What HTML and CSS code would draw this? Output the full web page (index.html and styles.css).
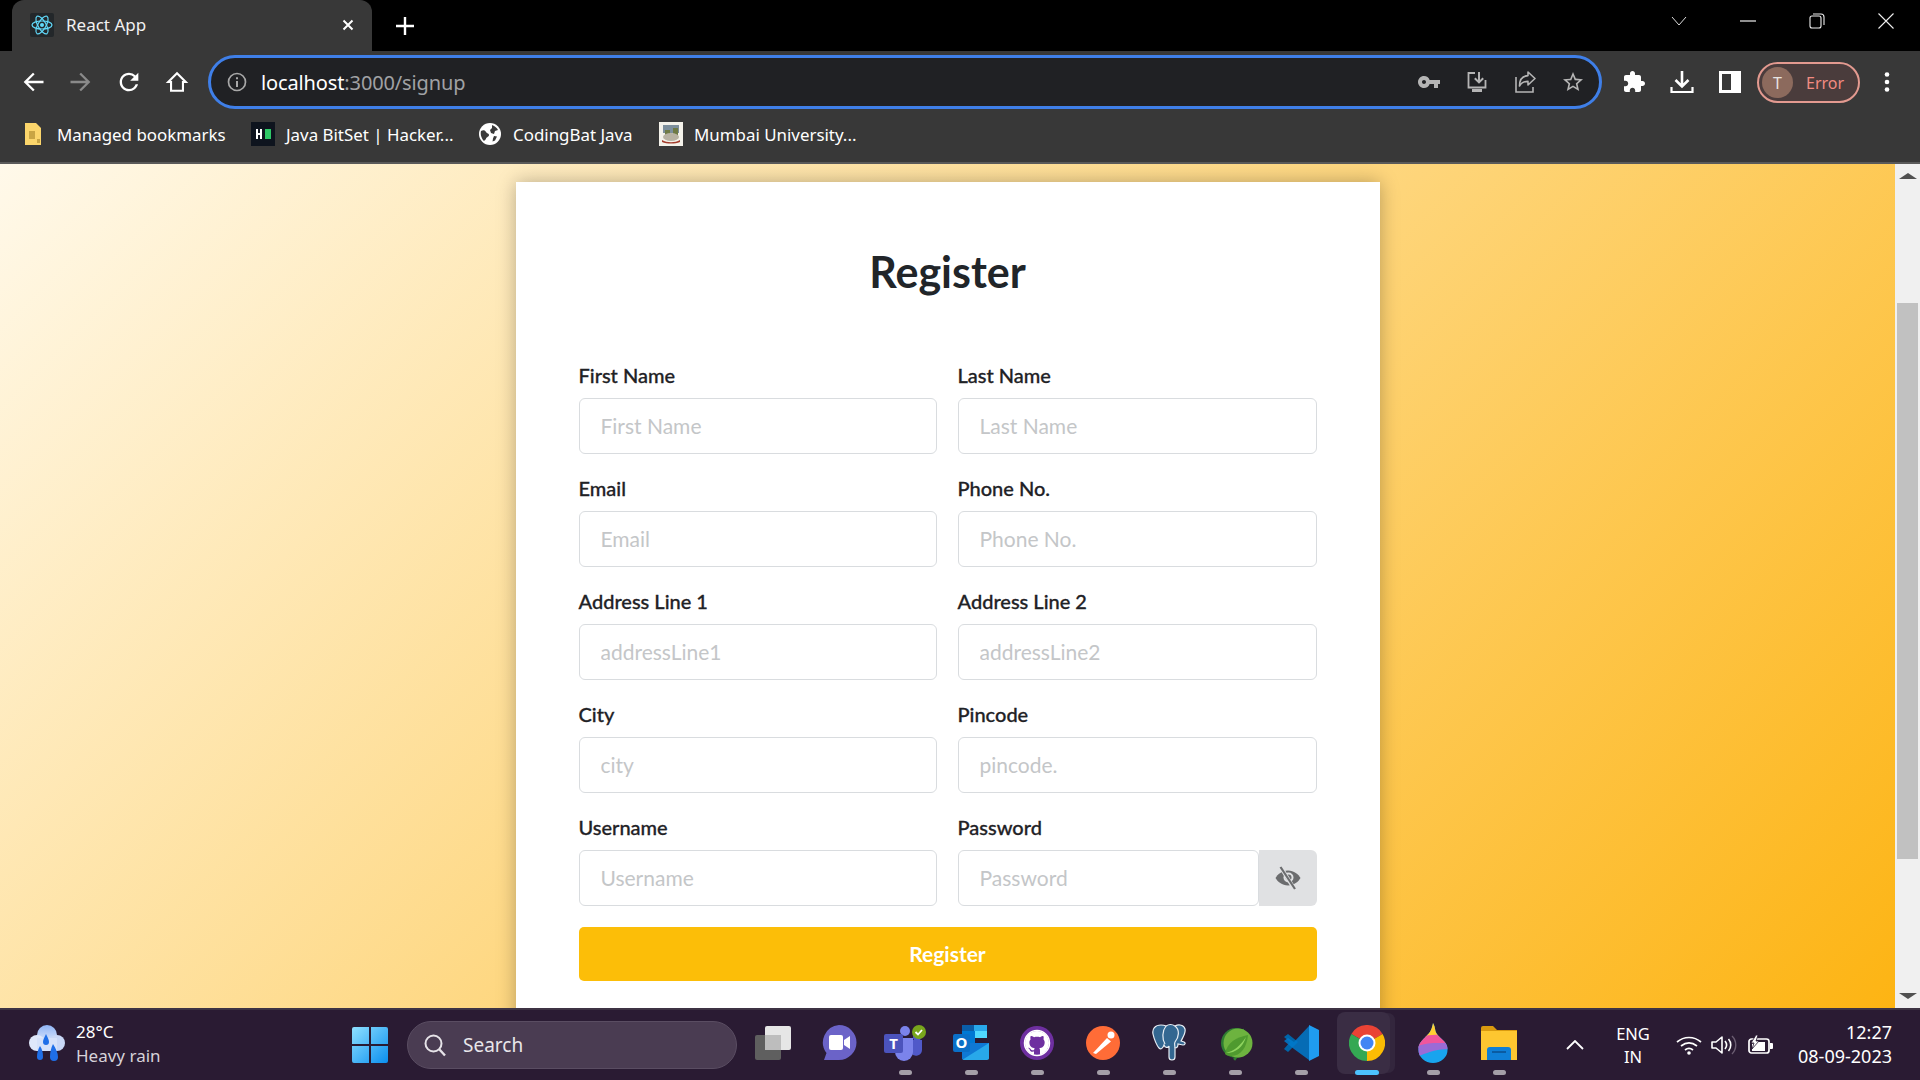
FILE: index.html
```html
<!DOCTYPE html>
<html lang="en">
<head>
<meta charset="utf-8">
<title>React App</title>
<link rel="stylesheet" href="styles.css">
</head>
<body>
<header class="chrome">
  <div class="tabstrip">
    <div class="tab">
      <svg class="favicon" viewBox="0 0 24 24"><rect width="24" height="24" rx="2" fill="#23272a"/><g fill="none" stroke="#61dafb" stroke-width="1.2"><ellipse cx="12" cy="12" rx="10" ry="4"/><ellipse cx="12" cy="12" rx="10" ry="4" transform="rotate(60 12 12)"/><ellipse cx="12" cy="12" rx="10" ry="4" transform="rotate(120 12 12)"/></g><circle cx="12" cy="12" r="2" fill="#61dafb"/></svg>
      <span class="tab-title">React App</span>
      <svg class="tab-close" viewBox="0 0 12 12"><path d="M1.500 1.500l9 9M10.500 1.500l-9 9" stroke="#fff" stroke-width="2"/></svg>
    </div>
    <svg class="new-tab" viewBox="0 0 18 18"><path d="M9 0v18M0 9h18" stroke="#fff" stroke-width="2.400"/></svg>
    <div class="winctl">
      <span class="winbtn"><svg viewBox="0 0 16 10" width="16" height="10"><path d="M1 1l7 8 7-8" fill="none" stroke="#ddd" stroke-width="1"/></svg></span>
      <span class="winbtn"><svg viewBox="0 0 16 2" width="16" height="2"><path d="M0 1h16" stroke="#eee" stroke-width="1.200"/></svg></span>
      <span class="winbtn"><svg viewBox="0 0 16 16" width="16" height="16"><rect x="1" y="3" width="11" height="12" rx="2" fill="none" stroke="#eee" stroke-width="1.100"/><path d="M4 1h8a3 3 0 0 1 3 3v8" fill="none" stroke="#eee" stroke-width="1.100"/></svg></span>
      <span class="winbtn"><svg viewBox="0 0 16 16" width="16" height="16"><path d="M.5.5l15 15M15.500.5l-15 15" stroke="#eee" stroke-width="1.100"/></svg></span>
    </div>
  </div>
  <div class="toolbar">
    <span class="tb-btn tb-nav"><svg viewBox="0 0 24 24"><path fill="#fff" d="M21 11H7.800l5.600-5.600L12 4l-8 8 8 8 1.400-1.400L7.800 13H21z"/></svg></span>
    <span class="tb-btn tb-nav"><svg viewBox="0 0 24 24"><path fill="#8a8a8a" d="M3 11h13.200l-5.600-5.600L12 4l8 8-8 8-1.400-1.400 5.600-5.600H3z"/></svg></span>
    <span class="tb-btn tb-nav"><svg viewBox="0 0 24 24"><path fill="#fff" d="M17.650 6.350A7.958 7.958 0 0 0 12 4c-4.420 0-7.990 3.580-7.990 8s3.570 8 7.990 8c3.730 0 6.840-2.550 7.730-6h-2.080A5.990 5.990 0 0 1 12 18c-3.310 0-6-2.690-6-6s2.690-6 6-6c1.660 0 3.140.69 4.220 1.780L13 11h7V4l-2.350 2.350z"/></svg></span>
    <span class="tb-btn tb-nav"><svg viewBox="0 0 24 24"><path fill="none" stroke="#fff" stroke-width="1.800" d="M12 4.500L4.500 12h2.400v7.500h10.200V12h2.400z"/></svg></span>
    <div class="omnibox">
      <svg class="info" viewBox="0 0 20 20"><circle cx="10" cy="10" r="8.500" fill="none" stroke="#a8a8a8" stroke-width="1.700"/><path d="M10 9v6M10 5.200v2" stroke="#a8a8a8" stroke-width="2"/></svg>
      <span class="url"><span class="url-host">localhost</span><span class="url-rest">:3000/signup</span></span>
      <span class="omni-icons">
        <span class="tb-btn"><svg viewBox="0 0 24 24"><path fill="#b5b5b5" d="M12.650 10A5.990 5.990 0 0 0 7 6c-3.310 0-6 2.690-6 6s2.690 6 6 6a5.990 5.990 0 0 0 5.650-4H17v4h4v-4h2v-4H12.650zM7 14c-1.100 0-2-.9-2-2s.9-2 2-2 2 .9 2 2-.9 2-2 2z"/></svg></span>
        <span class="tb-btn"><svg viewBox="0 0 24 24"><path fill="none" stroke="#b5b5b5" stroke-width="1.800" d="M10 3H3.500v14.500h17V10"/><path fill="none" stroke="#b5b5b5" stroke-width="2" d="M14 2v10M9.800 8.200L14 12.400l4.200-4.200"/><path fill="#b5b5b5" d="M7 19h10v3H7z"/></svg></span>
        <span class="tb-btn"><svg viewBox="0 0 24 24"><path fill="none" stroke="#b5b5b5" stroke-width="1.600" d="M3 7v15h17v-5"/><path fill="none" stroke="#b5b5b5" stroke-width="1.600" stroke-linejoin="round" d="M15 2l7 6.500-7 6.500v-3.600c-4 0-6.500 1-8.500 4.600 0-6 3-10 8.500-10.400z"/></svg></span>
        <span class="tb-btn"><svg viewBox="0 0 24 24"><path fill="#b5b5b5" d="M22 9.240l-7.190-.62L12 2 9.190 8.630 2 9.240l5.460 4.730L5.820 21 12 17.270 18.180 21l-1.630-7.030L22 9.240zM12 15.400l-3.760 2.270 1-4.280-3.320-2.880 4.380-.38L12 6.100l1.710 4.040 4.380.38-3.320 2.880 1 4.280L12 15.400z"/></svg></span>
      </span>
    </div>
    <span class="tb-btn tb-first"><svg viewBox="0 0 24 24"><path fill="#fff" d="M20.500 11H19V7c0-1.100-.9-2-2-2h-4V3.500C13 2.120 11.880 1 10.500 1S8 2.120 8 3.500V5H4c-1.100 0-1.990.9-1.990 2v3.800H3.500c1.490 0 2.700 1.210 2.700 2.700s-1.210 2.700-2.700 2.700H2V20c0 1.100.9 2 2 2h3.800v-1.500c0-1.490 1.210-2.700 2.700-2.700 1.490 0 2.700 1.210 2.700 2.700V22H17c1.100 0 2-.9 2-2v-4h1.500c1.380 0 2.500-1.120 2.500-2.500S21.880 11 20.500 11z"/></svg></span>
    <span class="tb-btn"><svg viewBox="0 0 24 24"><path fill="none" stroke="#fff" stroke-width="2.600" d="M12 1v15M5.500 10l6.500 6.500 6.500-6.500"/><path fill="none" stroke="#fff" stroke-width="2.200" d="M1.500 17v5h21v-5"/></svg></span>
    <span class="tb-btn"><svg viewBox="0 0 24 24"><path fill="#fff" fill-rule="evenodd" d="M1 1h22v22H1zM4 4v16h9V4z"/></svg></span>
    <div class="profile"><span class="avatar">T</span><span class="profile-text">Error</span></div>
    <span class="tb-btn tb-menu"><svg viewBox="0 0 24 24"><circle cx="12" cy="4.500" r="2.300" fill="#fff"/><circle cx="12" cy="12" r="2.300" fill="#fff"/><circle cx="12" cy="19.500" r="2.300" fill="#fff"/></svg></span>
  </div>
  <div class="bookmarks">
    <div class="bm bm-1"><svg class="bm-icon" viewBox="0 0 18 24"><path fill="#fbd56b" d="M1 1h11l5 5v17H1z"/><path fill="#c9a544" d="M5 9h6v8H5zM13 17h3v4h-3z"/></svg><span>Managed bookmarks</span></div>
    <div class="bm bm-2"><svg class="bm-icon-sq" viewBox="0 0 24 24"><rect width="24" height="24" fill="#0e141e"/><path fill="#fff" d="M5 7h2v4h2V7h2v10H9v-4H7v4H5z"/><path fill="#2ec866" d="M14 7h6v10h-6z"/></svg><span>Java BitSet | Hacker...</span></div>
    <div class="bm bm-3"><svg class="bm-icon-sq" viewBox="0 0 24 24"><circle cx="12" cy="12" r="11" fill="#fff"/><path fill="#3a3a3a" d="M3 9c2-1 4-1 5 1s3 1 3 3-3 2-3 4l-2 2C4 17 2 13 3 9zM14 3c3 1 5 3 6 5l-3 1-1 3-3-1-1-3 2-2zM16 14l3 .5-2 4-2.500 1 .5-3z"/></svg><span>CodingBat Java</span></div>
    <div class="bm"><svg class="bm-icon-sq" viewBox="0 0 24 24"><rect width="24" height="24" fill="#f4f2ea"/><path fill="#7d8f9c" d="M4 3h16v8H4z"/><path fill="#6f7a45" d="M6 8h5v6H6zM14 6h5v8h-5z"/><ellipse cx="12" cy="15" rx="8" ry="4" fill="#b8b2a2"/><path fill="#a33c2c" d="M3 18c5 3 13 3 18 0v2c-5 2-13 2-18 0z"/></svg><span>Mumbai University...</span></div>
  </div>
</header>

<main class="viewport">
  <div class="page">
    <section class="card">
      <h1 class="card-title">Register</h1>
      <form class="form-grid">
        <div class="field"><label class="label">First Name</label><input class="input" placeholder="First Name"></div>
        <div class="field"><label class="label">Last Name</label><input class="input" placeholder="Last Name"></div>
        <div class="field"><label class="label">Email</label><input class="input" placeholder="Email"></div>
        <div class="field"><label class="label">Phone No.</label><input class="input" placeholder="Phone No."></div>
        <div class="field"><label class="label">Address Line 1</label><input class="input" placeholder="addressLine1"></div>
        <div class="field"><label class="label">Address Line 2</label><input class="input" placeholder="addressLine2"></div>
        <div class="field"><label class="label">City</label><input class="input" placeholder="city"></div>
        <div class="field"><label class="label">Pincode</label><input class="input" placeholder="pincode."></div>
        <div class="field"><label class="label">Username</label><input class="input" placeholder="Username"></div>
        <div class="field"><label class="label">Password</label>
          <div class="input-group">
            <input class="input input-joined" placeholder="Password">
            <span class="eye-btn"><svg viewBox="0 0 28 24" width="28" height="24"><path fill="#6b6c6e" d="M14 4.500C8 4.500 3.500 8.500 1.500 12c2 3.500 6.500 7.500 12.500 7.500S24.500 15.500 26.500 12c-2-3.500-6.500-7.500-12.500-7.500z"/><circle cx="14.500" cy="11.500" r="5" fill="#e0e1e3"/><circle cx="14.500" cy="11.500" r="3" fill="#6b6c6e"/><path d="M6 0l15 24" stroke="#e0e1e3" stroke-width="4"/><path d="M6.500 1l14.500 22" stroke="#6b6c6e" stroke-width="2.200"/></svg></span>
          </div>
        </div>
        <button type="button" class="submit">Register</button>
      </form>
    </section>
  </div>
  <aside class="scrollbar">
    <span class="arrow arrow-up"></span>
    <span class="thumb"></span>
    <span class="arrow arrow-down"></span>
  </aside>
</main>

<footer class="taskbar">
  <div class="weather">
    <svg class="weather-icon" viewBox="0 0 38 40">
      <defs><linearGradient id="cloud" x1="0" y1="0" x2="0" y2="1"><stop offset="0" stop-color="#8fb4f5"/><stop offset="1" stop-color="#e8eefb"/></linearGradient></defs>
      <circle cx="19" cy="11" r="10" fill="url(#cloud)"/><circle cx="9" cy="19" r="8" fill="#dfe8fb"/><circle cx="29" cy="19" r="8" fill="#c9d8f7"/><rect x="9" y="14" width="20" height="13" fill="#d6e2fa"/>
      <path fill="#1f6fe8" d="M18 10c2 4 3 6 3 8a3 3 0 0 1-6 0c0-2 1-4 3-8zM12 22c2 3 3 6 3 11a3 3 0 0 1-6 0c0-4 1-8 3-11zM25 20c3 5 5 9 5 13a4 4 0 0 1-8 0c0-5 1-9 3-13z"/>
    </svg>
    <div class="weather-text"><span class="w-temp">28°C</span><span class="w-desc">Heavy rain</span></div>
  </div>
  <span class="start"><svg viewBox="0 0 36 36" width="36" height="36"><defs><linearGradient id="win" x1="0" y1="0" x2="1" y2="1"><stop offset="0" stop-color="#8fe0ff"/><stop offset="1" stop-color="#0a8fef"/></linearGradient></defs><path fill="url(#win)" d="M0 2a2 2 0 0 1 2-2h15v17H0zM19 0h15a2 2 0 0 1 2 2v15H19zM0 19h17v17H2a2 2 0 0 1-2-2zM19 19h17v15a2 2 0 0 1-2 2H19z"/></svg></span>
  <div class="search"><svg viewBox="0 0 24 24" width="24" height="24"><circle cx="10.500" cy="10.500" r="8" fill="none" stroke="#e6e3e8" stroke-width="2"/><path d="M16 16l6 6.500" stroke="#e6e3e8" stroke-width="2.400"/></svg><span>Search</span></div>
  <div class="apps">
    <span class="app"><svg class="ic" viewBox="0 0 36 34"><rect x="10" y="0" width="26" height="24" rx="2" fill="#e6e6e6"/><rect x="0" y="9" width="26" height="25" rx="2" fill="#5f5f5f"/><rect x="10" y="9" width="16" height="15" fill="#bdbdbd"/></svg></span>
    <span class="app"><svg class="ic" viewBox="0 0 36 36"><path fill="#6b63c8" d="M18 0a17.500 17.500 0 0 1 0 35H3l2.500-7A17.500 17.500 0 0 1 18 0z"/><rect x="8" y="10" width="14" height="15" rx="2" fill="#fff"/><path fill="#fff" d="M23 15l6-4v13l-6-4z"/></svg></span>
    <span class="app app-dot"><svg class="ic ic-w" viewBox="0 0 44 36"><circle cx="22" cy="6" r="5" fill="#7b83eb"/><circle cx="34" cy="12" r="4" fill="#5059c9"/><path fill="#5059c9" d="M28 15h11v10a6 6 0 0 1-11 3z"/><path fill="#7b83eb" d="M12 13h18v14a9 9 0 0 1-18 0z"/><rect x="1" y="9" width="19" height="19" rx="2" fill="#4b53bc"/><text x="10.500" y="24" class="svg-t">T</text><circle cx="36" cy="7" r="7" fill="#78a51c"/><path d="M32.500 7l2.500 2.500 4-4.500" fill="none" stroke="#fff" stroke-width="1.800"/></svg></span>
    <span class="app app-dot"><svg class="ic" viewBox="0 0 36 36"><path fill="#0a5ea8" d="M9 0h25v12H9z"/><path fill="#28a8ea" d="M21 0h13v6H21z"/><path fill="#0078d4" d="M9 6h13v12H9z"/><path fill="#50d9ff" d="M22 6h12v7H22z"/><path fill="#0f78d4" d="M9 18h27v16H9z"/><path fill="#28a8ea" d="M9 35l27-17v15a2 2 0 0 1-2 2z"/><rect x="0" y="9" width="17" height="18" rx="2" fill="#0a6fc7"/><text x="8.500" y="23" class="svg-t">O</text></svg></span>
    <span class="app app-dot"><svg class="ic" viewBox="0 0 36 36"><circle cx="18" cy="18" r="17" fill="#6e2fa0"/><circle cx="18" cy="18" r="12.500" fill="none" stroke="#fff" stroke-width="1.500"/><svg x="6" y="6" width="24" height="24" viewBox="0 0 16 16"><path fill="#fff" d="M8 0C3.580 0 0 3.580 0 8c0 3.540 2.290 6.530 5.470 7.590.4.070.55-.17.55-.38 0-.19-.01-.82-.01-1.490-2.010.37-2.530-.49-2.690-.94-.09-.23-.48-.94-.82-1.130-.28-.15-.68-.52-.01-.53.63-.01 1.080.58 1.230.82.72 1.210 1.870.87 2.330.66.070-.52.28-.87.51-1.070-1.780-.2-3.640-.89-3.640-3.950 0-.87.31-1.590.82-2.150-.08-.2-.36-1.020.08-2.120 0 0 .67-.21 2.200.82.64-.18 1.320-.27 2-.27.68 0 1.360.09 2 .27 1.530-1.040 2.200-.82 2.200-.82.44 1.100.16 1.920.08 2.120.51.56.82 1.270.82 2.150 0 3.070-1.870 3.750-3.650 3.950.29.25.54.73.54 1.480 0 1.070-.01 1.930-.01 2.200 0 .21.15.46.55.38A8.013 8.013 0 0 0 16 8c0-4.420-3.580-8-8-8z"/></svg></svg></span>
    <span class="app app-dot"><svg class="ic" viewBox="0 0 36 36"><circle cx="18" cy="18" r="17" fill="#ff6c37"/><path d="M8 28L22 13l4 3.500L11 29z" fill="#fff"/><circle cx="26" cy="10" r="3.500" fill="#fff"/></svg></span>
    <span class="app app-dot"><svg class="ic ic-tall" viewBox="0 0 36 38"><path fill="#336791" stroke="#e8eef5" stroke-width="1.200" d="M10 1C4 1 1 5 2 10c1 5 4 12 6 14 2 2 4 0 5-3 1 3 4 3 5 1v11c0 4 6 4 6 0v-9c2 0 3-2 3-4l5 1c2 0 3-2 1-3l-3-1c2-4 5-8 4-12-1-4-6-5-10-3-3-2-6-2-9 0-2-1-3-1-5-1z"/><path d="M15 2c-4 5-4 13-1 18M24 2c5 4 4 11 0 16-1 2 0 4 0 6" fill="none" stroke="#e8eef5" stroke-width="1.200"/></svg></span>
    <span class="app app-dot"><svg class="ic" viewBox="0 0 36 36"><path d="M19 34.500A16.500 16.500 0 0 1 29 5" fill="none" stroke="#2f7d32" stroke-width="3" stroke-dasharray="2.500 2"/><circle cx="19" cy="18" r="15" fill="#2f7d32"/><circle cx="21" cy="18" r="14.500" fill="#6db33f"/><path d="M8 29c2-12 12-17 23-19-1 12-7 21-17 21-3 0-5-1-6-2z" fill="#4f9a2f"/><path d="M9 28c8-2 14-7 20-16-3 10-10 16-20 16z" fill="#8fd45f"/></svg></span>
    <span class="app app-dot"><svg class="ic" viewBox="0 0 36 36"><path fill="#0065a9" d="M1 12l4-3 10 8-10 10-4-3 6-7z"/><path fill="#007acc" d="M26 1L11 17 5 13 1 16l10 8L26 35z" opacity=".85"/><path fill="#1f9cf0" d="M26 0l10 5v26l-10 5z"/></svg></span>
    <span class="app app-active"><span class="active-bg"></span><svg class="ic ic-z" viewBox="0 0 36 36"><path fill="#ea4335" d="M18 18L2.400 9A18 18 0 0 1 33.600 9z"/><path fill="#fbbc04" d="M18 18L33.600 9A18 18 0 0 1 18 36z"/><path fill="#34a853" d="M18 18L18 36A18 18 0 0 1 2.400 9z"/><circle cx="18" cy="18" r="8.500" fill="#fff"/><circle cx="18" cy="18" r="6.500" fill="#4285f4"/></svg></span>
    <span class="app app-dot"><svg class="ic ic-tall" viewBox="0 0 30 38"><defs><clipPath id="dropclip"><path d="M15 0c3 5 1 8 5 12 4 4 9 7 9 13a14 13 0 0 1-28 0c0-7 6-10 9-14 3-3 4-6 5-11z"/></clipPath></defs><g clip-path="url(#dropclip)"><rect width="30" height="38" fill="#18a4ee"/><path fill="#ffcf33" d="M0 0h30v12L8 14z"/><path fill="#f0569c" d="M0 14c8-3 20-3 30-3v9C20 19 8 22 0 24z"/><path fill="#9b6bd6" d="M0 22c10-4 20-3 30-3v6C18 24 8 29 0 32z"/></g></svg></span>
    <span class="app app-dot"><svg class="ic" viewBox="0 0 36 34"><path fill="#d99a0f" d="M0 2a2 2 0 0 1 2-2h10l4 4h20v6H0z"/><path fill="#fdc630" d="M0 5h36v29H0z"/><path fill="#0f7fd6" d="M6 34V24a3 3 0 0 1 3-3h18a3 3 0 0 1 3 3v10z"/><path stroke="#0a4f8f" stroke-width="1.500" d="M11 26h14"/></svg></span>
  </div>
  <span class="tray-chevron"><svg viewBox="0 0 18 10" width="18" height="10"><path d="M1 9l8-8 8 8" fill="none" stroke="#fff" stroke-width="1.800"/></svg></span>
  <div class="lang"><span>ENG</span><span>IN</span></div>
  <span class="tray-icon tray-wifi"><svg viewBox="0 0 26 20" width="26" height="20"><g fill="none" stroke="#fff" stroke-width="1.700"><path d="M1 7c7-6 17-6 24 0"/><path d="M5 11c5-4 11-4 16 0"/><path d="M9 15c2.500-2 5.500-2 8 0"/></g><circle cx="13" cy="18" r="1.800" fill="#fff"/></svg></span>
  <span class="tray-icon tray-vol"><svg viewBox="0 0 26 20" width="26" height="20"><path d="M1 7h4l6-5v16l-6-5H1z" fill="none" stroke="#fff" stroke-width="1.600" stroke-linejoin="round"/><path d="M14 6c2 2.500 2 5.500 0 8M17.500 4c3 3.500 3 8.500 0 12" fill="none" stroke="#fff" stroke-width="1.600"/><path d="M21 1c5 5 5 13 0 18" fill="none" stroke="#6b5d72" stroke-width="1.400"/></svg></span>
  <span class="tray-icon tray-batt"><svg viewBox="0 0 26 20" width="26" height="20"><rect x="1" y="4" width="20" height="14" rx="2.500" fill="none" stroke="#fff" stroke-width="1.700"/><path d="M22 8h2a1 1 0 0 1 1 1v4a1 1 0 0 1-1 1h-2z" fill="#fff"/><path d="M4 16V9l4-2h9v9z" fill="#fff"/><path d="M8 0L3 8h3l-2 6 7-8H8l2-6z" fill="#fff" stroke="#2a1b33" stroke-width=".8"/></svg></span>
  <div class="clock"><span>12:27</span><span>08-09-2023</span></div>
</footer>
</body>
</html>
```

FILE: styles.css
```css
* { box-sizing: border-box; }
html, body { margin: 0; height: 100%; overflow: hidden; }
body { display: flex; flex-direction: column; width: 1920px; height: 1080px; font-family: "Noto Sans", sans-serif; }

/* browser chrome */
.chrome { flex: none; height: 164px; background: #383838; border-bottom: 2px solid #5a5a5a; display: flex; flex-direction: column; }
.tabstrip { height: 51px; background: #000; display: flex; align-items: flex-start; padding-left: 12px; }
.tab { width: 360px; height: 51px; background: #383838; border-radius: 12px 12px 0 0; display: flex; align-items: center; padding: 0 0 2px 18px; }
.favicon { width: 24px; height: 24px; flex: none; }
.tab-title { margin-left: 12px; font-size: 17px; color: #f1f1f1; flex: 1; }
.tab-close { width: 12px; height: 12px; margin-right: 18px; }
.new-tab { width: 18px; height: 18px; margin: 17px 0 0 24px; }
.winctl { margin-left: auto; display: flex; height: 42px; align-items: center; }
.winbtn { display: flex; justify-content: center; align-items: center; width: 69px; }

.toolbar { height: 63px; display: flex; align-items: flex-start; padding: 4px 0 0 9px; }
.tb-btn { flex: none; width: 48px; height: 54px; display: flex; align-items: center; justify-content: center; }
.tb-btn svg { width: 24px; height: 24px; }
.tb-btn.tb-nav svg { width: 28px; height: 28px; }
.omnibox { flex: none; width: 1394px; height: 54px; margin-left: 7px; background: #202124; border: 3px solid #3f7fe8; border-radius: 27px; display: flex; align-items: center; padding-left: 16px; }
.info { width: 20px; height: 20px; flex: none; }
.url { margin-left: 14px; font-size: 20px; letter-spacing: -.13px; flex: 1; white-space: nowrap; }
.url-host { color: #fff; }
.url-rest { color: #a0a2a5; }
.omni-icons { display: flex; margin-right: 2px; height: 48px; align-items: center; }
.omni-icons .tb-btn { height: 48px; }
.tb-first { margin-left: 8px; }
.profile { flex: none; width: 103px; height: 41px; margin: 7px 0 0 3px; background: #4a3c3c; border: 2px solid #e39a90; border-radius: 21px; display: flex; align-items: center; padding-left: 3px; }
.avatar { width: 31px; height: 31px; border-radius: 50%; background: #8c6a5d; color: #e8e4e2; font-size: 16px; display: flex; align-items: center; justify-content: center; }
.profile-text { margin-left: 13px; color: #f28b82; font-size: 16px; }
.tb-menu { margin-left: 3px; }

.bookmarks { height: 48px; display: flex; align-items: center; padding: 0 0 8px 24px; color: #fff; font-size: 16.900px; }
.bm { display: flex; align-items: center; white-space: nowrap; }
.bm-1 { width: 227px; }
.bm-2 { width: 227px; }
.bm-3 { width: 181px; }
.bm-icon { width: 18px; height: 24px; margin-right: 15px; flex: none; }
.bm-icon-sq { width: 24px; height: 24px; margin-right: 11px; flex: none; }

/* page */
.viewport { flex: none; height: 844px; display: flex; overflow: hidden; }
.page { flex: 1; min-width: 0; height: 100%; overflow: hidden; background: linear-gradient(135deg, #fff9ea 0%, #fdb413 100%); padding-top: 18px; }
.card { width: 864px; margin: 0 auto; background: #fff; padding: 66px 63px 63px; box-shadow: 0 0 18px rgba(0,0,0,.28); font-family: Lato, sans-serif; color: #212529; }
.card-title { margin: 0 0 66px; font-size: 43px; line-height: 48px; font-weight: 700; text-align: center; }
.form-grid { display: grid; grid-template-columns: 358px 359px; column-gap: 21px; row-gap: 21px; }
.field { display: flex; flex-direction: column; }
.label { font-size: 20px; line-height: 26px; margin-bottom: 10px; font-weight: 500; color: #1f2226; -webkit-text-stroke: .3px #1f2226; }
.input { width: 100%; height: 56px; border: 1px solid #d9dcdf; border-radius: 6px; padding: 0 21px 2px; font: 400 21px Lato, sans-serif; color: #212529; background: #fff; outline: 0; }
.input::placeholder { color: #c4c6c8; opacity: 1; }
.input-group { display: flex; }
.input-joined { flex: 1; min-width: 0; }
.eye-btn { flex: none; width: 58px; height: 56px; background: #e0e1e3; border-radius: 0 6px 6px 0; display: flex; align-items: center; justify-content: center; }
.submit { grid-column: 1 / -1; height: 54px; border: 0; border-radius: 5px; padding: 0 0 2px; background: #fcbe08; color: #fff; font: 700 21px Lato, sans-serif; }

.scrollbar { flex: none; width: 25px; background: #f0f0f0; display: flex; flex-direction: column; align-items: center; padding-top: 9px; }
.arrow { width: 0; height: 0; border-left: 9px solid transparent; border-right: 9px solid transparent; flex: none; }
.arrow-up { border-bottom: 6px solid #505050; }
.arrow-down { border-top: 6px solid #505050; margin-top: 134px; }
.thumb { flex: none; width: 21px; height: 556px; margin-top: 124px; background: #c1c1c1; }

/* taskbar */
.taskbar { flex: none; height: 72px; background: #2a1b33; border-top: 2px solid #3d3344; display: flex; align-items: center; color: #fff; }
.weather { flex: none; width: 340px; display: flex; align-items: center; padding: 0 0 2px 28px; }
.weather-icon { width: 38px; height: 40px; flex: none; }
.weather-text { margin-left: 10px; display: flex; flex-direction: column; font-size: 17px; line-height: 24px; }
.w-desc { color: #d6d2d9; }
.start { flex: none; width: 60px; display: flex; justify-content: center; }
.search { flex: none; width: 330px; height: 48px; margin: 0 3px 0 7px; background: #4a3c52; border: 1px solid #5a4d62; border-radius: 24px; display: flex; align-items: center; padding-left: 15px; color: #e8e6ea; font-size: 19px; }
.search span { margin-left: 16px; }
.apps { flex: none; display: flex; width: 792px; align-items: center; }
.app { flex: none; width: 66px; height: 70px; display: flex; align-items: center; justify-content: center; position: relative; padding-bottom: 4px; }
.ic { width: 36px; height: 36px; }
.ic-w { width: 44px; }
.ic-tall { height: 40px; }
.ic-z { position: relative; }
.svg-t { fill: #fff; font: 700 15px "Noto Sans", sans-serif; text-anchor: middle; }
.app-dot::after { content: ""; position: absolute; left: 27px; bottom: 5px; width: 13px; height: 5px; border-radius: 3px; background: #a49fa8; }
.active-bg { position: absolute; left: 3px; top: 2px; width: 53px; height: 62px; border-radius: 8px; background: #3a2d44; box-shadow: 6px 0 0 -1px #33263d; }
.app-active::after { content: ""; position: absolute; left: 21px; bottom: 5px; width: 24px; height: 5px; border-radius: 3px; background: #4cc2ff; }
.tray-chevron { flex: none; width: 40px; margin-left: 23px; display: flex; justify-content: center; }
.lang { flex: none; width: 60px; margin-left: 8px; display: flex; flex-direction: column; align-items: center; font-size: 16.500px; line-height: 23px; }
.tray-icon { flex: none; width: 34px; display: flex; justify-content: center; }
.tray-wifi { margin-left: 9px; }
.tray-vol { margin-left: 1px; }
.tray-batt { margin-left: 3px; }
.clock { margin-left: auto; padding: 0 28px 2px 0; display: flex; flex-direction: column; align-items: flex-end; font-size: 18px; line-height: 24px; }
```
